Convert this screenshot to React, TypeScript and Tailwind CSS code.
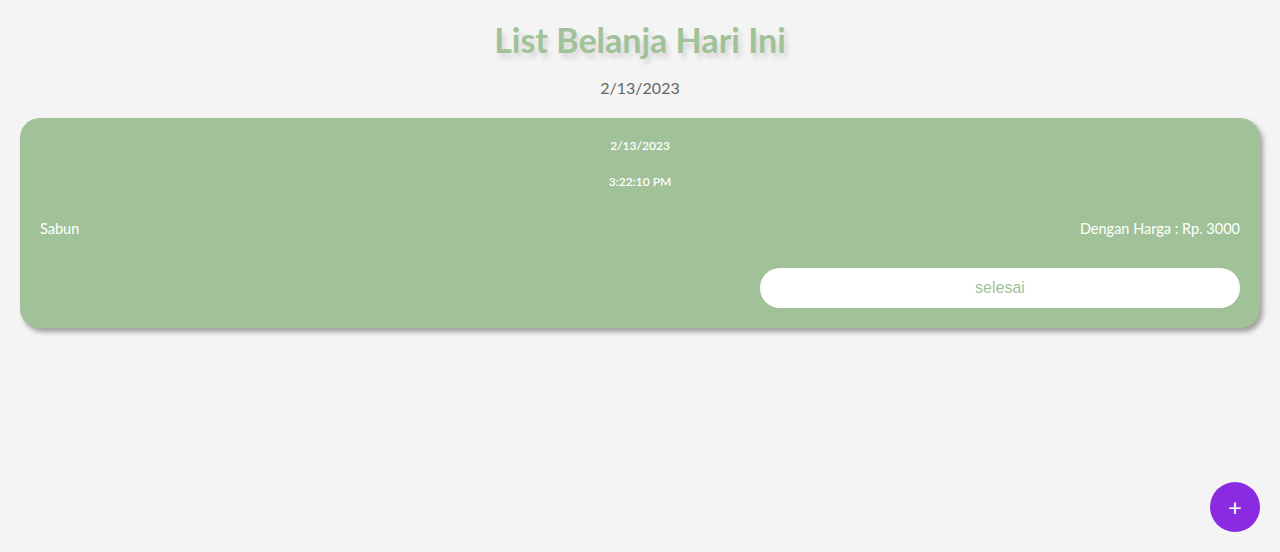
import React from 'react';

const items = [{ name: 'Sabun', harga: 3000, date: '2/13/2023', time: '3:22:10 PM' }];

export default function App() {
  return (
    <div className="min-h-[552px] w-full bg-[#f4f4f4] font-['Lato',sans-serif] relative">
      <div className="flex flex-col items-center pt-[20px]">
        <h1 className="text-[34px] leading-[40px] font-bold text-[#a1c299] [text-shadow:3px_5px_5px_rgba(0,0,0,0.12)]">
          List Belanja Hari Ini
        </h1>
        <p className="mt-[17px] text-[16px] leading-[22px] text-[#666]">2/13/2023</p>
      </div>

      <div className="px-5 mt-[19px]">
        {items.map((item) => (
          <div
            key={item.name}
            className="rounded-[20px] bg-[#a1c299] px-5 pb-5 pt-[21px] text-white shadow-[3px_4px_5px_rgba(0,0,0,0.35)]"
          >
            <p className="text-center text-[12px] leading-[14px] font-semibold">{item.date}</p>
            <p className="mt-[22px] text-center text-[12px] leading-[14px] font-semibold">{item.time}</p>
            <div className="mt-[30px] flex justify-between text-[14.5px] leading-[20px]">
              <span>{item.name}</span>
              <span>Dengan Harga : Rp. {item.harga}</span>
            </div>
            <div className="mt-[29px] flex justify-end">
              <button className="h-10 w-[480px] rounded-full bg-white font-['Liberation_Sans',sans-serif] text-[16px] text-[#a1c299]">
                selesai
              </button>
            </div>
          </div>
        ))}
      </div>

      <button className="absolute right-5 bottom-5 flex h-[50px] w-[50px] items-center justify-center rounded-full bg-[#8a2be2] text-white text-[24px] leading-none">
        +
      </button>
    </div>
  );
}
